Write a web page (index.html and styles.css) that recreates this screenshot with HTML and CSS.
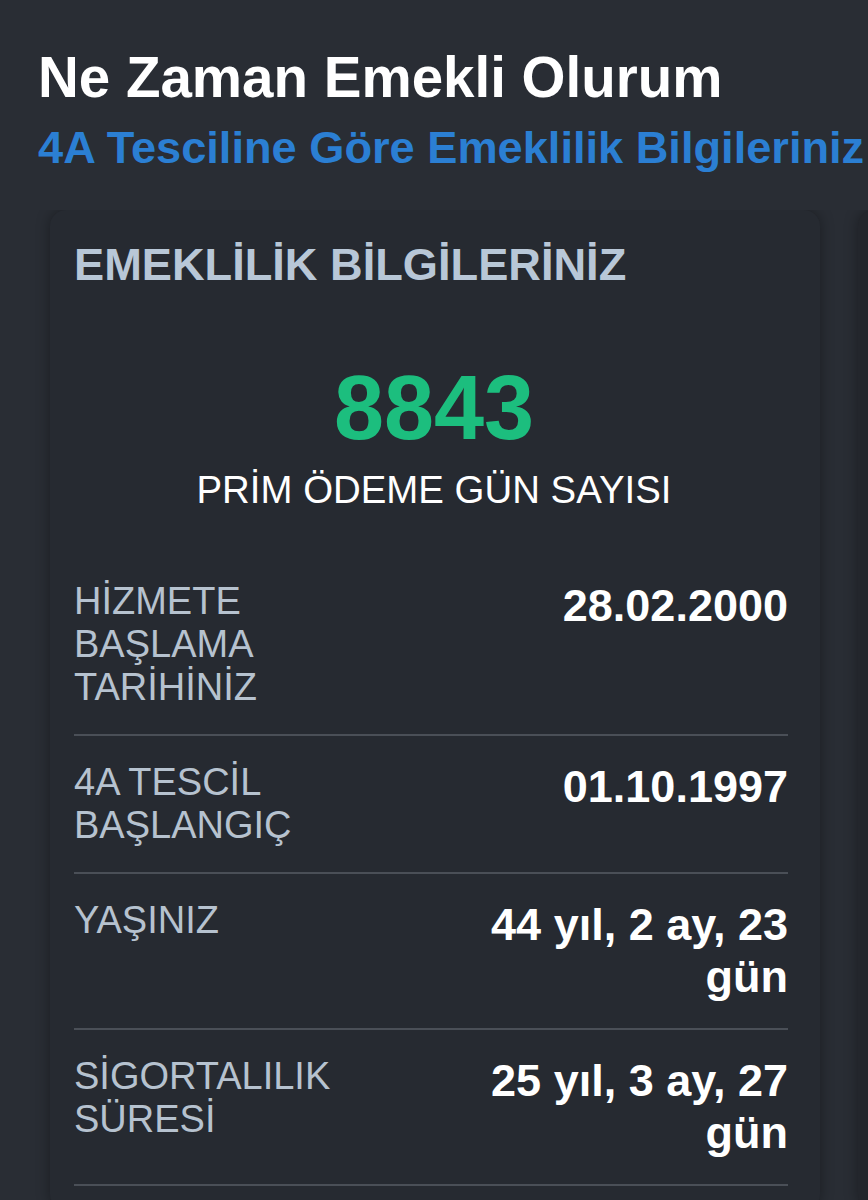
FILE: index.html
```html
<!DOCTYPE html>
<html lang="tr">
<head>
<meta charset="utf-8">
<title>Ne Zaman Emekli Olurum</title>
<link rel="stylesheet" href="styles.css">
</head>
<body>
<header class="page-head">
  <h1 class="title">Ne Zaman Emekli Olurum</h1>
  <h2 class="subtitle">4A Tesciline Göre Emeklilik Bilgileriniz</h2>
</header>
<main class="cards">
  <section class="card">
    <h3 class="card-title">EMEKLİLİK BİLGİLERİNİZ</h3>
    <div class="summary">
      <div class="big-number">8843</div>
      <div class="big-label">PRİM ÖDEME GÜN SAYISI</div>
    </div>
    <div class="rows">
      <div class="row">
        <div class="label">HİZMETE BAŞLAMA TARİHİNİZ</div>
        <div class="value">28.02.2000</div>
      </div>
      <div class="row">
        <div class="label">4A TESCİL BAŞLANGIÇ</div>
        <div class="value">01.10.1997</div>
      </div>
      <div class="row">
        <div class="label">YAŞINIZ</div>
        <div class="value">44 yıl, 2 ay, 23 gün</div>
      </div>
      <div class="row">
        <div class="label">SİGORTALILIK SÜRESİ</div>
        <div class="value">25 yıl, 3 ay, 27 gün</div>
      </div>
    </div>
  </section>
  <section class="card card-next"></section>
</main>
</body>
</html>
```

FILE: styles.css
```css
html, body {
  margin: 0;
  padding: 0;
}
body {
  background: #292d34;
  font-family: "Liberation Sans", Arial, sans-serif;
  width: 868px;
  height: 1200px;
  overflow: hidden;
}
.page-head {
  padding: 46px 0 0 38px;
}
.title {
  margin: 0;
  font-size: 56.5px;
  line-height: 64px;
  font-weight: 700;
  color: #ffffff;
  white-space: nowrap;
}
.subtitle {
  margin: 12px 0 0;
  font-size: 45.2px;
  line-height: 52px;
  font-weight: 700;
  color: #2b7fd3;
  white-space: nowrap;
}
.cards {
  margin-top: 36px;
  padding: 0 0 0 50px;
  display: flex;
  gap: 38px;
  overflow: hidden;
  height: 1000px;
}
.card {
  flex: 0 0 770px;
  box-sizing: border-box;
  background: #262a31;
  border-radius: 16px;
  box-shadow: 0 0 14px rgba(0, 0, 0, 0.35);
  padding: 29px 32px 60px 24px;
}
.card-next {
  flex: 0 0 40px;
  background: #23262c;
  min-height: 1000px;
}
.card-title {
  margin: 0;
  font-size: 45.2px;
  line-height: 52px;
  font-weight: 700;
  color: #b8c7d7;
  white-space: nowrap;
}
.summary {
  margin-top: 67px;
  padding-left: 6px;
  text-align: center;
}
.big-number {
  font-size: 90px;
  line-height: 100px;
  font-weight: 700;
  color: #1cbe7e;
}
.big-label {
  margin-top: 10px;
  font-size: 38.4px;
  line-height: 44px;
  color: #ffffff;
}
.rows {
  margin-top: 43px;
}
.row {
  display: grid;
  grid-template-columns: 1fr 1fr;
  column-gap: 16px;
  align-items: start;
  padding: 25px 0;
  border-bottom: 2px solid #4a4f57;
}
.label {
  font-size: 38px;
  line-height: 43px;
  color: #b6c2cf;
}
.value {
  text-align: right;
  font-size: 45px;
  line-height: 52px;
  font-weight: 700;
  color: #ffffff;
}
```
